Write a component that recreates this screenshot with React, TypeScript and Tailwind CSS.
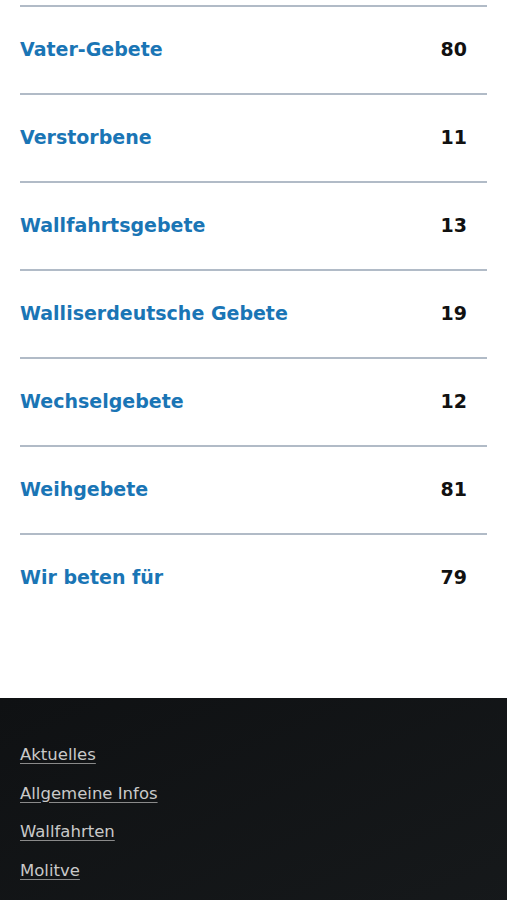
import React from "react";

const items: [string, number][] = [
  ["Vater-Gebete", 80],
  ["Verstorbene", 11],
  ["Wallfahrtsgebete", 13],
  ["Walliserdeutsche Gebete", 19],
  ["Wechselgebete", 12],
  ["Weihgebete", 81],
  ["Wir beten für", 79],
];

const links = ["Aktuelles", "Allgemeine Infos", "Wallfahrten", "Molitve"];

export default function App() {
  return (
    <div
      className="min-h-[900px] bg-white flex flex-col"
      style={{ fontFamily: '"DejaVu Sans", "Open Sans", sans-serif' }}
    >
      <ul className="px-5 pt-[5px] pb-[77px]">
        {items.map(([name, count]) => (
          <li
            key={name}
            className="h-[88px] border-t-2 border-[#b1bbc7] flex items-center justify-between pr-5 pb-[2px]"
          >
            <a className="text-[19px] font-bold text-[#1a75b5]">{name}</a>
            <span className="text-[19px] font-bold text-[#111]">{count}</span>
          </li>
        ))}
      </ul>
      <footer className="flex-1 bg-gradient-to-br from-[#0f1113] to-[#16191b] px-5 pt-[45px] pb-10">
        <nav className="flex flex-col gap-[14.5px]">
          {links.map((l) => (
            <a
              key={l}
              className="text-[16.5px] leading-[24px] text-[#c9c9c9] underline underline-offset-[3px] decoration-[#8a8a8a] self-start"
            >
              {l}
            </a>
          ))}
        </nav>
      </footer>
    </div>
  );
}
